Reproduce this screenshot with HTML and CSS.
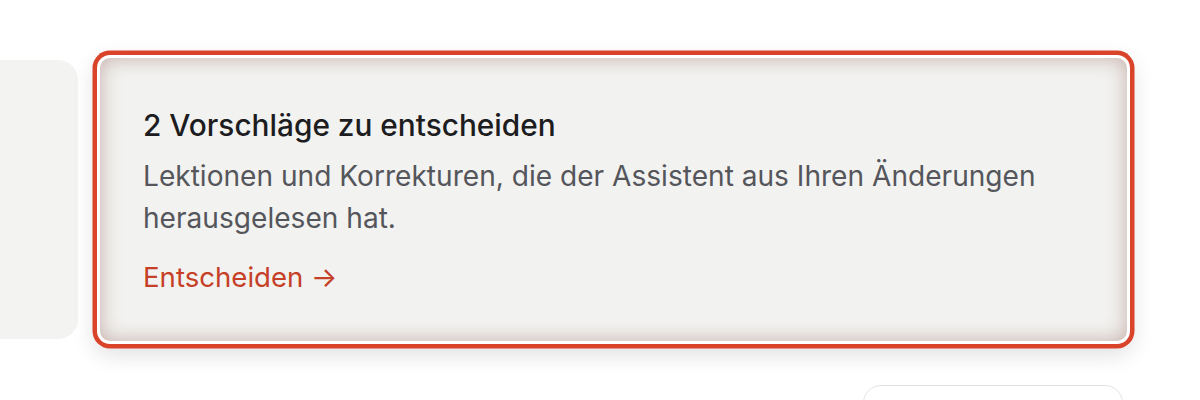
FILE: index.html
```html
<!DOCTYPE html>
<html lang="de">
<head>
<meta charset="utf-8">
<link rel="stylesheet" href="styles.css">
</head>
<body>
<div class="page">
  <div class="row">
    <div class="side-card"></div>
    <div class="card">
      <h2 class="card-title">2 Vorschläge zu entscheiden</h2>
      <p class="card-text">Lektionen und Korrekturen, die der Assistent aus Ihren Änderungen herausgelesen hat.</p>
      <a class="card-link" href="#">Entscheiden →</a>
    </div>
  </div>
  <div class="actions">
    <button class="ghost-btn" type="button"></button>
  </div>
</div>
</body>
</html>
```

FILE: styles.css
```css
html, body {
  margin: 0;
  padding: 0;
  background: #ffffff;
}
body {
  font-family: Inter, "Noto Sans", sans-serif;
}
.page {
  width: 1200px;
  height: 400px;
  overflow: hidden;
  padding-top: 58px;
  box-sizing: border-box;
}
.row {
  display: flex;
  gap: 22px;
  align-items: stretch;
}
.side-card {
  width: 78px;
  flex: none;
  background: #f3f3f2;
  border-radius: 0 20px 20px 0;
  margin-top: 2px;
  margin-bottom: 2px;
}
.card {
  width: 1027px;
  box-sizing: border-box;
  flex: none;
  background: #f2f2f0;
  border-radius: 10px;
  padding: 49px 43px 46px;
  box-shadow:
    inset 0 0 20px rgba(130, 75, 65, 0.4),
    0 0 0 3px #ffffff,
    0 0 0 7.5px #d9432a,
    0 8px 22px 6px rgba(0, 0, 0, 0.12);
}
.card-title {
  margin: 0 0 12px;
  font-size: 29.8px;
  font-weight: 500;
  line-height: 36px;
  color: #1d1d1f;
}
.card-text {
  margin: 0 0 20px;
  font-size: 28.1px;
  line-height: 42px;
  color: #55565b;
}
.card-link {
  font-size: 27.6px;
  line-height: 36px;
  color: #c63f27;
  text-decoration: none;
}
.actions {
  display: flex;
  justify-content: flex-end;
  padding-right: 77px;
  margin-top: 44px;
}
.ghost-btn {
  width: 260px;
  height: 48px;
  background: #ffffff;
  border: 1.5px solid #e3e3e3;
  border-radius: 18px;
}
```
